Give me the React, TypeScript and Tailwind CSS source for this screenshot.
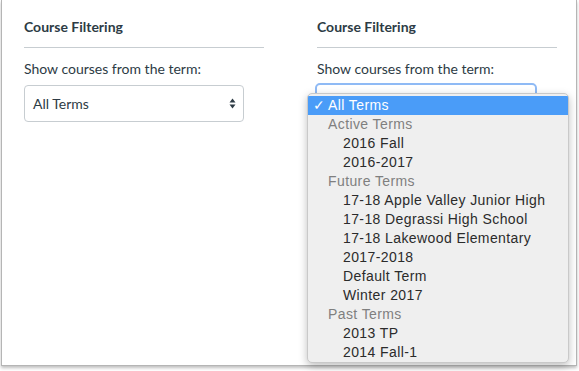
import React from "react";

function Arrows() {
  return (
    <svg width="7" height="11" viewBox="0 0 7 11" className="shrink-0">
      <path d="M3.5 0.5 L6.5 4.5 L0.5 4.5 Z" fill="#2d3b45" />
      <path d="M3.5 10.5 L6.5 6.5 L0.5 6.5 Z" fill="#2d3b45" />
    </svg>
  );
}

function Header() {
  return (
    <>
      <h2 className="text-[14px] font-bold text-[#2d3b45] leading-[20px] pt-[17px] pb-[10px] border-b border-[#c7cdd1]">
        Course Filtering
      </h2>
      <p className="text-[14px] text-[#2d3b45] leading-[20px] mt-[11px]">
        Show courses from the term:
      </p>
    </>
  );
}

type Row = { kind: "sel" | "group" | "opt"; label: string };

const rows: Row[] = [
  { kind: "sel", label: "All Terms" },
  { kind: "group", label: "Active Terms" },
  { kind: "opt", label: "2016 Fall" },
  { kind: "opt", label: "2016-2017" },
  { kind: "group", label: "Future Terms" },
  { kind: "opt", label: "17-18 Apple Valley Junior High" },
  { kind: "opt", label: "17-18 Degrassi High School" },
  { kind: "opt", label: "17-18 Lakewood Elementary" },
  { kind: "opt", label: "2017-2018" },
  { kind: "opt", label: "Default Term" },
  { kind: "opt", label: "Winter 2017" },
  { kind: "group", label: "Past Terms" },
  { kind: "opt", label: "2013 TP" },
  { kind: "opt", label: "2014 Fall-1" },
];

export default function App() {
  return (
    <div className="w-[579px] h-[371px] bg-white overflow-hidden" style={{ fontFamily: "Lato, 'Liberation Sans', sans-serif" }}>
      <div className="relative ml-[1px] w-[576px] h-[366px] bg-white border-l border-r border-b border-[#b5b5b5] shadow-[0_2px_3px_rgba(0,0,0,0.25)]">
        <div className="flex pl-[22px] gap-[53px]">
          <div className="w-[240px]">
            <Header />
            <div className="mt-[6px] w-[220px] h-[37px] border border-[#c7cdd1] rounded-[4px] flex items-center justify-between pl-[8px] pr-[7px]">
              <span className="text-[14px] text-[#2d3b45]">All Terms</span>
              <Arrows />
            </div>
          </div>
          <div className="w-[240px] relative">
            <Header />
            <div className="mt-[4px] -ml-[2px] w-[222px] h-[36px] border-2 border-[#8fbaf5] rounded-[5px]" />
            <div
              className="absolute left-[-10px] top-[93px] w-[262px] h-[270px] bg-[#efefef] border border-[#c9c9c9] rounded-[5px] shadow-[0_3px_8px_rgba(0,0,0,0.25)] pt-[2px] overflow-hidden tracking-[0.4px]"
              style={{ fontFamily: "'Liberation Sans', Arial, sans-serif" }}
            >
              {rows.map((r, i) =>
                r.kind === "sel" ? (
                  <div key={i} className="h-[19px] bg-[#4a9cf8] text-white text-[14px] leading-[19px] flex items-center pl-[5px]">
                    <span className="w-[15px] text-[14px]">✓</span>
                    <span>{r.label}</span>
                  </div>
                ) : r.kind === "group" ? (
                  <div key={i} className="h-[19px] text-[#7f7f7f] text-[14px] leading-[19px] pl-[20px]">
                    {r.label}
                  </div>
                ) : (
                  <div key={i} className="h-[19px] text-[#2b2b2b] text-[14px] leading-[19px] pl-[35px]">
                    {r.label}
                  </div>
                )
              )}
            </div>
          </div>
        </div>
      </div>
    </div>
  );
}
